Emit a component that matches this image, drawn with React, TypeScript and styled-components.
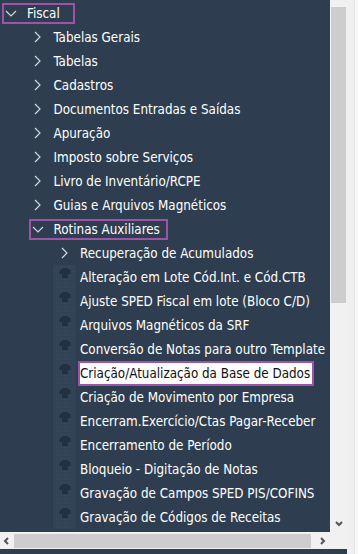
import React from "react";
import styled, { createGlobalStyle } from "styled-components";

const GlobalStyle = createGlobalStyle`
  html, body { margin: 0; padding: 0; }
  body {
    background: #2e3e50;
    overflow: hidden;
    font-family: "DejaVu Sans", Tahoma, sans-serif;
  }
`;

type Node = {
  label: string;
  open?: boolean;
  branch?: boolean;
  boxed?: boolean;
  selected?: boolean;
  padRight?: number;
  children?: Node[];
};

const level2Leaves = [
  "Alteração em Lote Cód.Int. e Cód.CTB",
  "Ajuste SPED Fiscal em lote (Bloco C/D)",
  "Arquivos Magnéticos da SRF",
  "Conversão de Notas para outro Template",
  "Criação/Atualização da Base de Dados",
  "Criação de Movimento por Empresa",
  "Encerram.Exercício/Ctas Pagar-Receber",
  "Encerramento de Período",
  "Bloqueio - Digitação de Notas",
  "Gravação de Campos SPED PIS/COFINS",
  "Gravação de Códigos de Receitas",
];

const tree: Node[] = [
  {
    label: "Fiscal",
    branch: true,
    open: true,
    boxed: true,
    padRight: 13,
    children: [
      ...[
        "Tabelas Gerais",
        "Tabelas",
        "Cadastros",
        "Documentos Entradas e Saídas",
        "Apuração",
        "Imposto sobre Serviços",
        "Livro de Inventário/RCPE",
        "Guias e Arquivos Magnéticos",
      ].map((l) => ({ label: l, branch: true })),
      {
        label: "Rotinas Auxiliares",
        branch: true,
        open: true,
        boxed: true,
        padRight: 6,
        children: [
          { label: "Recuperação de Acumulados", branch: true },
          ...level2Leaves.map((l) => ({
            label: l,
            selected: l === "Criação/Atualização da Base de Dados",
          })),
        ],
      },
    ],
  },
];

const Frame = styled.div`
  display: grid;
  grid-template-columns: 330px 17px 11px;
  grid-template-rows: 532px 17px 5px;
  width: 358px;
  height: 554px;
`;

const Viewport = styled.div`
  grid-column: 1;
  grid-row: 1;
  overflow: hidden;
  background: #2e3e50;
  padding-top: 1px;
  box-sizing: border-box;
`;

const TreeList = styled.ul`
  list-style: none;
  margin: 0;
  padding: 0;
`;

const Row = styled.div<{ $level: number }>`
  display: flex;
  align-items: center;
  height: 24px;
  padding-left: ${(p) => p.$level * 26.5 + 2}px;
  white-space: nowrap;
  color: #ffffff;
  font-size: 13.3px;
  font-stretch: condensed;
`;

const NodeBox = styled.div<{ $boxed?: boolean; $padRight?: number }>`
  display: flex;
  align-items: center;
  height: 21px;
  box-sizing: border-box;
  border: 2px solid ${(p) => (p.$boxed ? "#9c55a6" : "transparent")};
  padding-left: 1px;
  padding-right: ${(p) => p.$padRight ?? 0}px;
`;

const Toggle = styled.span`
  display: flex;
  align-items: center;
  justify-content: center;
  width: 12px;
  margin-right: 10px;
`;

const LeafIcon = styled.span`
  display: flex;
  width: 26px;
  height: 24px;
  margin-left: -3px;
`;

const Label = styled.span<{ $selected?: boolean }>`
  display: flex;
  align-items: center;
  height: ${(p) => (p.$selected ? "25px" : "21px")};
  box-sizing: border-box;
  border: 2px solid ${(p) => (p.$selected ? "#9c55a6" : "transparent")};
  background: ${(p) => (p.$selected ? "#fdfdfd" : "transparent")};
  color: ${(p) => (p.$selected ? "#111111" : "#ffffff")};
  padding-right: ${(p) => (p.$selected ? "2px" : "0")};
`;

const VScroll = styled.div`
  grid-column: 2;
  grid-row: 1;
  display: flex;
  flex-direction: column;
  background: #f1f1f1;
  border-left: 1px solid #f4f4f4;
  padding-top: 7px;
  box-sizing: border-box;
`;

const VThumb = styled.div`
  height: 296px;
  width: 15px;
  background: #cdcdcd;
`;

const ArrowBox = styled.div<{ $w: number; $h: number }>`
  display: flex;
  align-items: center;
  justify-content: center;
  width: ${(p) => p.$w}px;
  height: ${(p) => p.$h}px;
  flex: none;
`;

const VSpacer = styled.div`
  flex: 1;
`;

const HScroll = styled.div`
  grid-column: 1;
  grid-row: 2;
  display: flex;
  align-items: center;
  background: #f1f1f1;
`;

const HThumb = styled.div`
  width: 297px;
  height: 14px;
  background: #cdcdcd;
  flex: none;
`;

const Corner = styled.div`
  grid-column: 2;
  grid-row: 2;
  background: #f1f1f1;
`;

const RightStrip = styled.div`
  grid-column: 3;
  grid-row: 1 / 4;
  background: #f0f0f0;
  border-right: 3px solid #f7f7f7;
  box-sizing: border-box;
  display: flex;
  justify-content: flex-end;
`;

const StripLine = styled.div`
  width: 1px;
  background: #e3e3e3;
`;

const BottomStrip = styled.div`
  grid-column: 1 / 3;
  grid-row: 3;
  background: #2e3e50;
`;

const ChevronRight = () => (
  <svg width="7" height="12" viewBox="0 0 7 12">
    <polyline points="1,1 6,6 1,11" fill="none" stroke="#d4d8dc" strokeWidth="1.2" />
  </svg>
);

const ChevronDown = () => (
  <svg width="12" height="7" viewBox="0 0 12 7">
    <polyline points="1,1 6,6 11,1" fill="none" stroke="#d4d8dc" strokeWidth="1.2" />
  </svg>
);

const ScrollArrow = ({ dir }: { dir: "down" | "left" | "right" }) => {
  const pts =
    dir === "down" ? "1,2 4,5 7,2" : dir === "left" ? "5,1 2,4 5,7" : "3,1 6,4 3,7";
  return (
    <svg width="8" height="8" viewBox="0 0 8 8">
      <polyline points={pts} fill="none" stroke="#555555" strokeWidth="2" />
    </svg>
  );
};

const ItemIcon = () => (
  <svg width="26" height="24" viewBox="0 0 26 24">
    <defs>
      <pattern id="dots" width="2" height="2" patternUnits="userSpaceOnUse">
        <rect width="2" height="2" fill="#314256" />
        <rect width="1" height="1" fill="#38495d" />
      </pattern>
    </defs>
    <rect x="1" y="0" width="23" height="24" fill="url(#dots)" />
    <path
      d="M8 5 L11 3 L15 3 L18 5 L19 9 L16 9 L16 13 L10 13 L10 9 L7 9 Z"
      fill="#223040"
    />
  </svg>
);

const TreeNode = ({ node, level }: { node: Node; level: number }) => (
  <li>
    <Row $level={level}>
      {node.branch ? (
        <NodeBox $boxed={node.boxed} $padRight={node.padRight}>
          <Toggle>{node.open ? <ChevronDown /> : <ChevronRight />}</Toggle>
          <span>{node.label}</span>
        </NodeBox>
      ) : (
        <>
          <LeafIcon>
            <ItemIcon />
          </LeafIcon>
          <Label $selected={node.selected}>{node.label}</Label>
        </>
      )}
    </Row>
    {node.open && node.children && (
      <TreeList>
        {node.children.map((c) => (
          <TreeNode key={c.label} node={c} level={level + 1} />
        ))}
      </TreeList>
    )}
  </li>
);

export default function App() {
  return (
    <>
      <GlobalStyle />
      <Frame>
        <Viewport>
          <TreeList>
            {tree.map((n) => (
              <TreeNode key={n.label} node={n} level={0} />
            ))}
          </TreeList>
        </Viewport>
        <VScroll>
          <VThumb />
          <VSpacer />
          <ArrowBox $w={16} $h={17}>
            <ScrollArrow dir="down" />
          </ArrowBox>
        </VScroll>
        <HScroll>
          <ArrowBox $w={14} $h={17}>
            <ScrollArrow dir="left" />
          </ArrowBox>
          <HThumb />
          <VSpacer />
          <ArrowBox $w={17} $h={17}>
            <ScrollArrow dir="right" />
          </ArrowBox>
        </HScroll>
        <Corner />
        <RightStrip>
          <StripLine />
        </RightStrip>
        <BottomStrip />
      </Frame>
    </>
  );
}
